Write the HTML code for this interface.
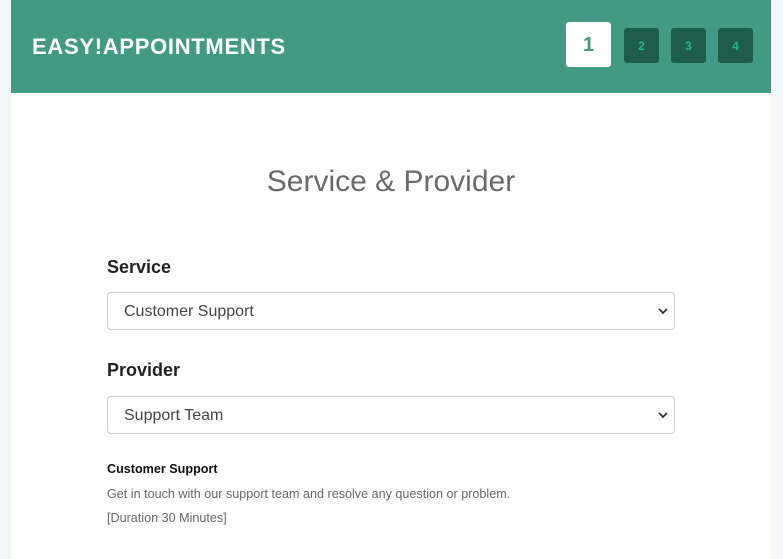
<!DOCTYPE html>
<html><head><meta charset="utf-8"><style>
*{box-sizing:border-box;margin:0;padding:0}
body{width:783px;height:559px;background:#f4f7f9;font-family:"Liberation Sans",sans-serif;position:relative;overflow:hidden}
.wrap{position:absolute;left:11px;top:0;width:760px;height:559px;background:#fff}
.hdr{position:absolute;left:0;top:0;width:760px;height:93px;background:#429a82}
.logo{position:absolute;left:21px;top:34px;color:#fff;font-weight:bold;font-size:22px;letter-spacing:0.7px}
.st{position:absolute;background:#1f5d4b;color:#1fb587;font-weight:bold;font-size:12px;display:flex;align-items:center;justify-content:center;border-radius:3px;width:35px;height:35px;top:28px}
.st1{background:#fff;color:#429a82;width:45px;height:45px;top:22px;font-size:20px;left:555px;padding-top:2px}
.title{position:absolute;left:0;width:760px;top:165px;text-align:center;font-size:30px;font-weight:300;color:#6a6a6a}
.lbl{position:absolute;left:96px;font-weight:bold;font-size:18px;color:#222}
.sel{position:absolute;left:96px;width:568px;height:38px;border:1px solid #ccc;border-radius:4px;font-size:16px;color:#444;padding:10px 16px}
.sel svg{position:absolute;right:6px;top:14px}
.s{position:absolute;left:96px;font-size:12.6px;color:#666}
</style></head><body>
<div class="wrap">
<div class="hdr">
<div class="logo">EASY!APPOINTMENTS</div>
<div class="st st1">1</div>
<div class="st" style="left:613px">2</div>
<div class="st" style="left:660px">3</div>
<div class="st" style="left:707px">4</div>
</div>
<div class="title">Service &amp; Provider</div>
<div class="lbl" style="top:257px">Service</div>
<div class="sel" style="top:292px">Customer Support<svg width="10" height="8" viewBox="0 0 10 8"><path d="M1 2l4 4 4-4" stroke="#333" stroke-width="1.8" fill="none"/></svg></div>
<div class="lbl" style="top:360px">Provider</div>
<div class="sel" style="top:396px">Support Team<svg width="10" height="8" viewBox="0 0 10 8"><path d="M1 2l4 4 4-4" stroke="#333" stroke-width="1.8" fill="none"/></svg></div>
<div class="s" style="top:462px;color:#111;font-weight:bold">Customer Support</div>
<div class="s" style="top:487px">Get in touch with our support team and resolve any question or problem.</div>
<div class="s" style="top:511px">[Duration 30 Minutes]</div>
</div>
</body></html>
